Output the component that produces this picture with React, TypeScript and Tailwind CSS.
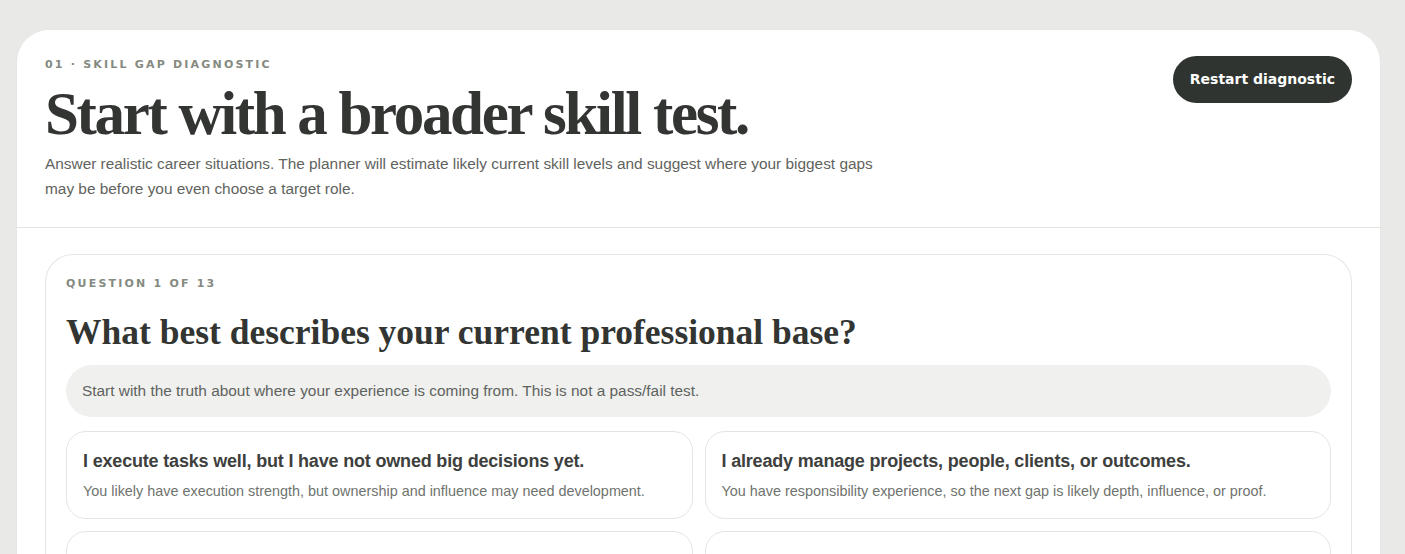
import React from "react";

const sans = { fontFamily: '"Liberation Sans", Arial, sans-serif' };
const serif = { fontFamily: '"Liberation Serif", "Times New Roman", serif' };
const wide = { fontFamily: '"DejaVu Sans", Verdana, sans-serif' };

const options = [
  {
    title: "I execute tasks well, but I have not owned big decisions yet.",
    desc: "You likely have execution strength, but ownership and influence may need development.",
  },
  {
    title: "I already manage projects, people, clients, or outcomes.",
    desc: "You have responsibility experience, so the next gap is likely depth, influence, or proof.",
  },
  {
    title: "I am changing fields and need to translate my experience.",
    desc: "Your strengths may transfer, but the language and proof for a new role may be missing.",
  },
  {
    title: "I am still deciding what kind of work I want to grow into.",
    desc: "The first gap may be clarity about direction before any specific skill.",
  },
];

function OptionCard({ title, desc }: { title: string; desc: string }) {
  return (
    <button className="text-left rounded-[20px] border border-[#e4e5e3] bg-white px-4 pt-[17px] pb-[17px] hover:border-[#c9ccc7]">
      <div className="text-[18px] font-bold leading-[24px] tracking-[-0.01em] text-[#3d403d]">{title}</div>
      <div className="mt-[8px] text-[14.4px] leading-[20px] text-[#6f736e]">{desc}</div>
    </button>
  );
}

export default function App() {
  return (
    <div className="min-h-screen bg-[#e9eae8] pt-[30px] pl-[17px] pr-[25px]" style={sans}>
      <div className="rounded-t-[32px] bg-white shadow-[0_1px_3px_rgba(0,0,0,0.04)]">
        <div className="flex items-start justify-between px-[28px] pt-[28px] pb-[26px] border-b border-[#e4e5e3]">
          <div>
            <div className="text-[11px] leading-[14px] font-bold tracking-[0.2em] text-[#848a80]" style={wide}>
              01 · SKILL GAP DIAGNOSTIC
            </div>
            <h1
              className="mt-[10px] text-[61px] leading-[64px] font-bold tracking-[-0.038em] text-[#323532]"
              style={serif}
            >
              Start with a broader skill test.
            </h1>
            <p className="mt-[5px] max-w-[850px] text-[15.4px] leading-[25px] text-[#5f635e]">
              Answer realistic career situations. The planner will estimate likely current skill levels and suggest where your biggest gaps may be before you even choose a target role.
            </p>
          </div>
          <button
            className="-mt-[2px] h-[47px] shrink-0 rounded-full bg-[#2f3430] px-[17px] text-[14px] font-bold text-white"
            style={wide}
          >
            Restart diagnostic
          </button>
        </div>
        <div className="px-[28px] pt-[26px]">
          <div className="rounded-t-[28px] border border-b-0 border-[#e4e5e3] px-[20px] pt-[22px] pb-[24px]">
            <div className="text-[11px] leading-[14px] font-bold tracking-[0.2em] text-[#848a80]" style={wide}>
              QUESTION 1 OF 13
            </div>
            <h2
              className="mt-[19px] text-[35.5px] leading-[44px] font-bold text-[#323532]"
              style={serif}
            >
              What best describes your current professional base?
            </h2>
            <div className="mt-[11px] flex h-[52px] items-center rounded-full bg-[#f0f0ef] px-[16px] text-[15.4px] text-[#5f635e]">
              Start with the truth about where your experience is coming from. This is not a pass/fail test.
            </div>
            <div className="mt-[14px] grid grid-cols-2 gap-[12px]">
              {options.map((o) => (
                <OptionCard key={o.title} {...o} />
              ))}
            </div>
          </div>
        </div>
      </div>
    </div>
  );
}
